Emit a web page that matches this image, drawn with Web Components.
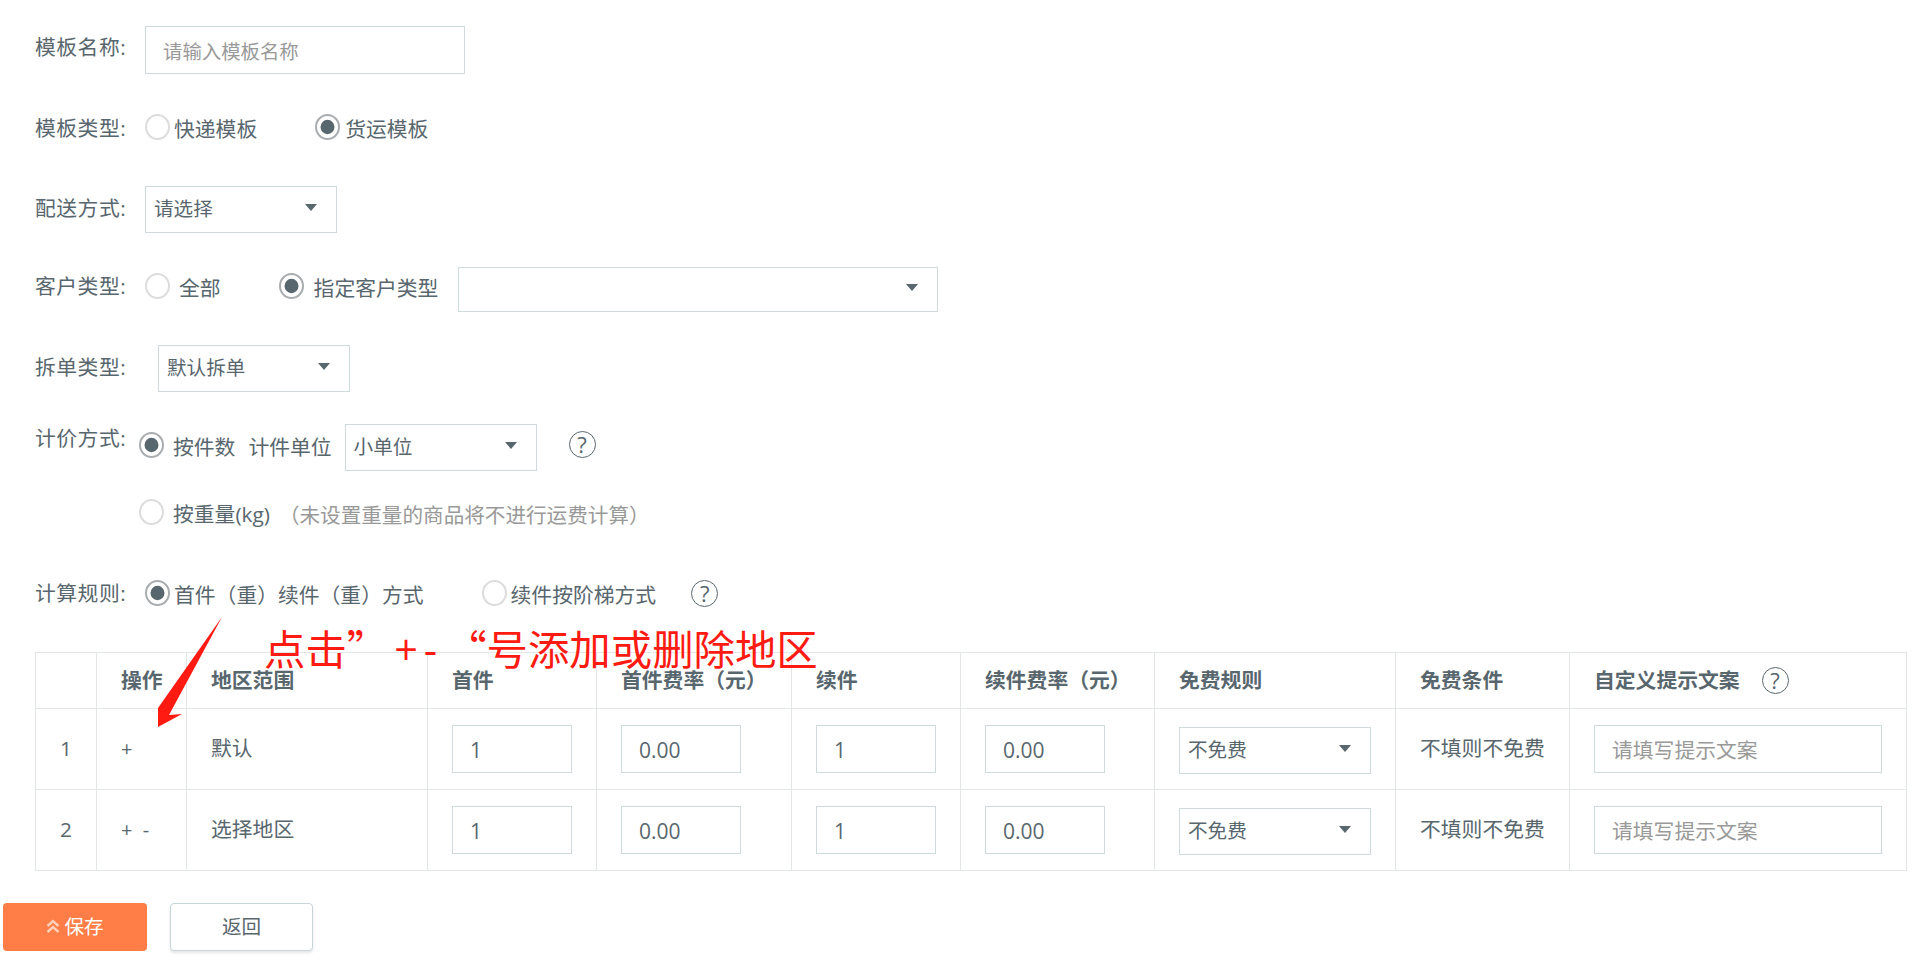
<!DOCTYPE html>
<html lang="zh-CN">
<head>
<meta charset="utf-8">
<title>运费模板</title>
<style>
  html, body { margin: 0; background: #fff; }
  body {
    position: relative;
    height: 969px;
    overflow: hidden;
    padding-top: 26px;
    box-sizing: border-box;
    color: #58666e;
    font-family: "Open Sans", "Noto Sans CJK SC", sans-serif;
    font-size: 20.8px;
    line-height: 1;
  }
  .name-input { width: 320px; height: 48px; }
  .select-m { width: 192px; height: 47px; }
  .select-wide { width: 480px; height: 45px; margin-left: 20px; }
  .up-row4 { align-self: flex-start; margin-top: 6px; }
  .up-row6 { margin-bottom: 5px; }
  .help-row6 { margin-bottom: 7px; }
</style>
</head>
<body>
  <form-row label="模板名称:" shift="-3">
    <ui-input class="name-input" placeholder="请输入模板名称"></ui-input>
  </form-row>

  <form-row label="模板类型:" shift="1" style="margin-top:40px">
    <ui-radio gap="4">快递模板</ui-radio>
    <ui-radio gap="5" checked style="margin-left:58px">货运模板</ui-radio>
  </form-row>

  <form-row label="配送方式:" shift="-1" style="margin-top:46px">
    <ui-select class="select-m">请选择</ui-select>
  </form-row>

  <form-row label="客户类型:" shift="-3" style="margin-top:34px">
    <ui-radio gap="9" class="up-row4">全部</ui-radio>
    <ui-radio gap="10" checked class="up-row4" style="margin-left:58px">指定客户类型</ui-radio>
    <ui-select class="select-wide"></ui-select>
  </form-row>

  <form-row label="拆单类型:" shift="-1" style="margin-top:33px">
    <ui-select class="select-m" style="margin-left:13px">默认拆单</ui-select>
  </form-row>

  <form-row label="计价方式:" shift="-9" style="margin-top:32px">
    <ui-radio gap="9" checked class="up-row6" style="margin-left:-6px">按件数</ui-radio>
    <span style="margin:0 13px;padding-bottom:1px">计件单位</span>
    <ui-select class="select-m">小单位</ui-select>
    <help-icon class="help-row6" style="margin-left:32px"></help-icon>
  </form-row>

  <form-row style="margin-top:28px">
    <ui-radio gap="9" style="margin-left:-6px">按重量(kg)</ui-radio>
    <span style="margin-left:9px;padding-top:6px;color:#999;font-size:20.6px">（未设置重量的商品将不进行运费计算）</span>
  </form-row>

  <form-row label="计算规则:" style="margin-top:54px">
    <ui-radio gap="4" checked>首件（重）续件（重）方式</ui-radio>
    <ui-radio gap="4" style="margin-left:58px">续件按阶梯方式</ui-radio>
    <help-icon style="margin-left:35px"></help-icon>
  </form-row>

  <rule-table style="margin-top:45px"></rule-table>

  <form-actions style="margin-top:32px">
    <ui-button primary>保存</ui-button>
    <ui-button>返回</ui-button>
  </form-actions>

  <click-note></click-note>

<script>
class UiInput extends HTMLElement {
  constructor() {
    super();
    this.attachShadow({ mode: "open" });
  }

  connectedCallback() {
    const value = this.getAttribute("value");
    const text = value || this.getAttribute("placeholder") || "";
    this.shadowRoot.innerHTML = `
      <style>
        :host {
          display: flex;
          align-items: center;
          box-sizing: border-box;
          border: 1px solid #cfdadd;
          padding: 3px 17px 0 17px;
          background: #fff;
        }
        span {
          font-size: var(--text-size, ${value ? "21px" : "19.4px"});
          white-space: nowrap;
          color: ${value ? "#58666e" : "#999"};
        }
      </style>
      <span>${text}</span>`;
  }
}
customElements.define("ui-input", UiInput);

class UiSelect extends HTMLElement {
  constructor() {
    super();
    this.attachShadow({ mode: "open" });
    this.shadowRoot.innerHTML = `
      <style>
        :host {
          display: flex;
          align-items: center;
          justify-content: space-between;
          box-sizing: border-box;
          border: 1px solid #cfdadd;
          padding: 0 19px 0 8px;
          background: #fff;
        }
        .text { font-size: 19.6px; white-space: nowrap; padding-bottom: 2px; }
        .caret {
          width: 0;
          height: 0;
          margin-bottom: 5px;
          border-left: 6px solid transparent;
          border-right: 6px solid transparent;
          border-top: 7px solid #58666e;
        }
      </style>
      <span class="text"><slot></slot></span>
      <span class="caret"></span>`;
  }
}
customElements.define("ui-select", UiSelect);

class UiRadio extends HTMLElement {
  constructor() {
    super();
    this.attachShadow({ mode: "open" });
  }

  connectedCallback() {
    const on = this.hasAttribute("checked");
    const gap = this.getAttribute("gap") || "4";
    this.shadowRoot.innerHTML = `
      <style>
        :host { display: inline-flex; align-items: center; height: 26px; white-space: nowrap; }
        svg { display: block; flex: none; }
        .text { margin-left: ${gap}px; padding-top: 5px; }
      </style>
      <svg width="25" height="26" viewBox="0 0 25 26">
        <ellipse cx="12.5" cy="13" rx="11.5" ry="12" fill="#fff"
          stroke="${on ? "#a9adaf" : "#dcdcdc"}" stroke-width="2"/>
        ${on ? '<ellipse cx="12.5" cy="13" rx="7" ry="7.2" fill="#58666e"/>' : ""}
      </svg>
      <span class="text"><slot></slot></span>`;
  }
}
customElements.define("ui-radio", UiRadio);

class HelpIcon extends HTMLElement {
  constructor() {
    super();
    this.attachShadow({ mode: "open" });
    this.shadowRoot.innerHTML = `
      <style>
        :host {
          display: inline-flex;
          align-items: center;
          justify-content: center;
          box-sizing: border-box;
          width: 27px;
          height: 27px;
          border: 1px solid #58666e;
          border-radius: 50%;
          font-size: 22px;
          font-weight: 400;
          line-height: 1;
          flex: none;
        }
      </style>?`;
  }
}
customElements.define("help-icon", HelpIcon);

class FormRow extends HTMLElement {
  constructor() {
    super();
    this.attachShadow({ mode: "open" });
  }

  connectedCallback() {
    const label = this.getAttribute("label") || "";
    // shift nudges the label off the row's centre line, in px
    const shift = Number(this.getAttribute("shift") || 0);
    this.shadowRoot.innerHTML = `
      <style>
        :host { display: flex; align-items: center; padding-left: 35px; }
        .label {
          flex: none;
          width: 110px;
          white-space: nowrap;
          letter-spacing: 0.5px;
          transform: translateY(${shift}px);
        }
      </style>
      <span class="label">${label}</span>
      <slot></slot>`;
  }
}
customElements.define("form-row", FormRow);

class RuleTable extends HTMLElement {
  constructor() {
    super();
    this.attachShadow({ mode: "open" });
  }

  connectedCallback() {
    const rows = [
      { no: 1, ops: "+", area: "默认" },
      { no: 2, ops: "+&nbsp;&nbsp;-", area: "选择地区" },
    ];
    const widths = [61, 90, 241, 169, 195, 169, 194, 241, 174, 337];
    const heads = ["", "操作", "地区范围", "首件", "首件费率（元）", "续件", "续件费率（元）", "免费规则", "免费条件"];
    const body = rows.map((r) => `
      <tr>
        <td>${r.no}</td>
        <td class="ops">${r.ops}</td>
        <td>${r.area}</td>
        <td><ui-input class="num" value="1"></ui-input></td>
        <td><ui-input class="num" value="0.00"></ui-input></td>
        <td><ui-input class="num" value="1"></ui-input></td>
        <td><ui-input class="num" value="0.00"></ui-input></td>
        <td><ui-select class="rule">不免费</ui-select></td>
        <td>不填则不免费</td>
        <td><ui-input class="tip" placeholder="请填写提示文案"></ui-input></td>
      </tr>`).join("");

    this.shadowRoot.innerHTML = `
      <style>
        :host { display: block; margin-left: 35px; width: 1871px; }
        table { border-collapse: collapse; table-layout: fixed; width: 1871px; }
        th, td {
          border: 1px solid #e3e6e7;
          padding: 0 0 0 24px;
          text-align: left;
          font-size: 20.8px;
          line-height: 1;
          white-space: nowrap;
        }
        th { height: 55px; font-weight: 700; }
        td { height: 80px; }
        .ops { font-size: 20px; }
        .head-tip { display: flex; align-items: center; gap: 22px; }
        .num { width: 120px; height: 48px; }
        .rule { width: 192px; height: 47px; margin-top: 4px; }
        .tip { width: 288px; height: 48px; --text-size: 20.8px; }
      </style>
      <table>
        <colgroup>${widths.map((w) => `<col style="width:${w}px">`).join("")}</colgroup>
        <tr>
          ${heads.map((h) => `<th>${h}</th>`).join("")}
          <th><div class="head-tip">自定义提示文案<help-icon></help-icon></div></th>
        </tr>
        ${body}
      </table>`;
  }
}
customElements.define("rule-table", RuleTable);

class FormActions extends HTMLElement {
  constructor() {
    super();
    this.attachShadow({ mode: "open" });
    this.shadowRoot.innerHTML = `
      <style>
        :host { display: flex; gap: 23px; padding-left: 3px; }
      </style>
      <slot></slot>`;
  }
}
customElements.define("form-actions", FormActions);

class UiButton extends HTMLElement {
  constructor() {
    super();
    this.attachShadow({ mode: "open" });
  }

  connectedCallback() {
    const primary = this.hasAttribute("primary");
    const icon = primary ? `
      <svg width="14" height="15" viewBox="0 0 14 15" fill="none" stroke="#ffd0bb" stroke-width="2.4">
        <path d="M1.5 7 7 2l5.5 5"/>
        <path d="M1.5 13 7 8l5.5 5"/>
      </svg>` : "";
    this.shadowRoot.innerHTML = `
      <style>
        :host {
          display: flex;
          align-items: center;
          justify-content: center;
          gap: 4px;
          box-sizing: border-box;
          width: ${primary ? 144 : 143}px;
          height: 48px;
          border-radius: 4px;
          font-size: 19.6px;
          ${primary
            ? "background:#ff7d47;color:#fff;"
            : "background:#fff;color:#58666e;border:1px solid #c7d5db;box-shadow:0 2px 3px rgba(0,0,0,.1);"}
        }
      </style>
      ${icon}<slot></slot>`;
  }
}
customElements.define("ui-button", UiButton);

// red hand-drawn note that lies over the form
class ClickNote extends HTMLElement {
  constructor() {
    super();
    this.attachShadow({ mode: "open" });
    this.shadowRoot.innerHTML = `
      <style>
        :host { position: absolute; left: 0; top: 0; pointer-events: none; }
        .note {
          position: absolute;
          left: 264px;
          top: 617px;
          color: #ff1a12;
          font: 41.4px/60px "Noto Sans CJK SC", sans-serif;
          white-space: nowrap;
        }
        .sign { margin: 0 2px 0 6px; letter-spacing: 6px; font-family: "Open Sans", sans-serif; }
        svg { position: absolute; left: 0; top: 0; }
      </style>
      <svg width="300" height="760" viewBox="0 0 300 760">
        <polygon fill="#ff1a12" points="222,617 158,708 158,727 182,714 169,715"/>
      </svg>
      <div class="note">点击”<span class="sign">+-</span>“号添加或删除地区</div>`;
  }
}
customElements.define("click-note", ClickNote);
</script>
</body>
</html>
